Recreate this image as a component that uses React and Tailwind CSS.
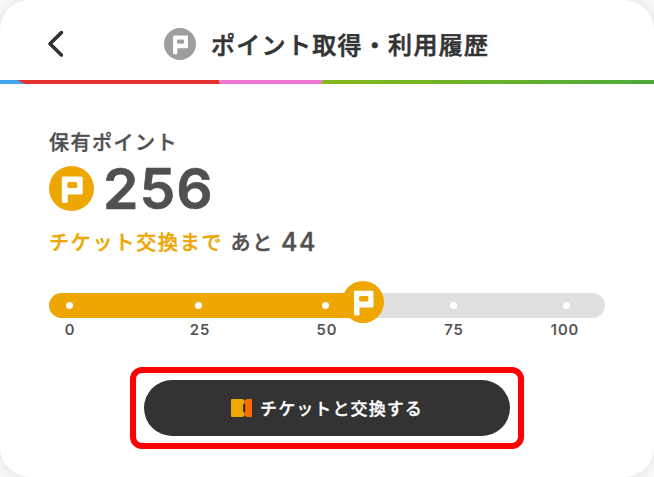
import React from 'react';

const steps = [
  { label: '0', dot: 'left-[17px]', text: 'left-[21px]' },
  { label: '25', dot: 'left-[146px]', text: 'left-[151px]' },
  { label: '50', dot: 'left-[273px]', text: 'left-[278px]' },
  { label: '75', dot: 'left-[401px]', text: 'left-[405px]' },
  { label: '100', dot: 'left-[514px]', text: 'left-[516px]' },
];

function PointIcon({ className }) {
  return (
    <svg viewBox="0 0 45 45" className={className}>
      <circle cx="22.5" cy="22.5" r="22.5" fill="currentColor" />
      <path
        fill="#fff"
        fillRule="evenodd"
        d="M14 10.5H32.2Q33.7 10.5 33.7 12V27Q33.7 28.5 32.2 28.5H18.8V35.6Q18.8 37 17.4 37H14.2Q12.8 37 12.8 35.6V12Q12.8 10.5 14 10.5ZM20 16Q18.3 16 18.3 17.5V20.4Q18.3 22 20 22H26.7Q28.3 22 28.3 20.4V17.5Q28.3 16 26.7 16Z"
      />
    </svg>
  );
}

function TicketIcon() {
  return (
    <svg viewBox="0 0 21 18" className="w-[21px] h-[18px] shrink-0">
      <path fill="#f0a800" d="M1 0H12.2Q12.3 1.3 13.7 1.6V4.5Q12 4.5 12 6V12Q12 13.5 13.7 13.5V16.4Q12.3 16.7 12.2 18H1Q0 18 0 17V1Q0 0 1 0Z" />
      <path fill="#ff6b00" d="M15.2 0H20Q21 0 21 1V17Q21 18 20 18H15.2Q15 16.7 13.7 16.4V13.5Q14.3 13 14.3 12V6Q14.3 5 13.7 4.5V1.6Q15 1.3 15.2 0Z" />
    </svg>
  );
}

function Header() {
  return (
    <header>
      <div className="relative flex h-20 items-center pt-[7px] pl-[164px]">
        <button className="absolute left-[47px] top-[30px]" aria-label="戻る">
          <svg viewBox="0 0 17 28" className="h-7 w-[17px]" fill="none" stroke="#333" strokeWidth="3.6" strokeLinecap="round" strokeLinejoin="round">
            <path d="M14.4 2.6L3 13.7L14.4 25" />
          </svg>
        </button>
        <PointIcon className="h-8 w-8 text-[#9e9e9e]" />
        <h1 className="ml-[15px] whitespace-nowrap text-[24px] font-medium leading-9 tracking-[1.3px] text-[#333] [-webkit-text-stroke:0.6px_#333]">
          ポイント取得・利用履歴
        </h1>
      </div>
      <svg viewBox="0 0 654 4" className="block h-1 w-full">
        <defs>
          <linearGradient id="green">
            <stop offset="0" stopColor="#86b81b" />
            <stop offset="1" stopColor="#4caa3a" />
          </linearGradient>
        </defs>
        <path fill="#42a5f0" d="M0 0H18L26 4H0Z" />
        <path fill="#e0312b" d="M17 0H219L220 4H25Z" />
        <path fill="#ee75d2" d="M219 0H323L321 4H220Z" />
        <path fill="url(#green)" d="M323 0H654V4H321Z" />
      </svg>
    </header>
  );
}

function Progress() {
  return (
    <div className="mt-[35px]">
      <div className="relative h-[25px] w-[556px] rounded-full bg-[#e0e0e0]">
        <div className="h-full w-[314px] rounded-l-full bg-[#eea600]" />
        {steps.map((step) => (
          <span key={step.label} className={`absolute top-[9px] h-[7px] w-[7px] rounded-full bg-white ${step.dot}`} />
        ))}
        <PointIcon className="absolute left-[293px] -top-[12px] h-[42px] w-[42px] text-[#eea600]" />
      </div>
      <div className="relative h-6 w-[556px]">
        {steps.map((step) => (
          <span key={step.label} className={`absolute top-[2px] -translate-x-1/2 font-['Inter'] text-[15px] font-medium leading-5 tracking-[0.9px] text-[#505050] [-webkit-text-stroke:0.2px_#505050] ${step.text}`}>
            {step.label}
          </span>
        ))}
      </div>
    </div>
  );
}

export default function App() {
  return (
    <div className="h-[477px] w-[654px] overflow-hidden bg-[#fafafa] font-['Noto_Sans_CJK_JP',sans-serif]">
      <div className="h-full overflow-hidden rounded-[30px] bg-white shadow-[0_0_14px_rgba(0,0,0,0.12)]">
        <Header />
        <main className="pl-[49px] pt-[43px] text-[#505050]">
          <p className="h-[30px] text-[20px] font-medium leading-[30px] tracking-[1.5px] [-webkit-text-stroke:0.4px_#505050]">保有ポイント</p>
          <div className="mt-[9px] flex h-[45px] items-center">
            <PointIcon className="h-[45px] w-[45px] text-[#eea600]" />
            <span className="ml-[9px] font-['Inter'] text-[57px] font-semibold leading-[45px] tracking-[1px] [-webkit-text-stroke:0.6px_#505050]">256</span>
          </div>
          <p className="mt-[15px] flex h-8 items-center whitespace-nowrap text-[20px] font-medium leading-8 tracking-[1.8px] [-webkit-text-stroke:0.4px_currentColor]">
            <span className="text-[#eea600] [-webkit-text-stroke:0.4px_#eea600]">チケット交換まで</span>
            <span className="ml-[7px]">あと</span>
            <span className="ml-[7px] font-['Inter'] text-[25px] tracking-[1.7px]">44</span>
          </p>
          <Progress />
        </main>
        <div className="ml-[130px] mt-[25px] h-[82px] w-[394px] rounded-xl border-[6px] border-[#ff0000] px-2 py-[7px]">
          <button className="flex h-14 w-[366px] items-center justify-center rounded-full bg-[#333] text-white">
            <TicketIcon />
            <span className="ml-2 whitespace-nowrap text-[17px] font-medium leading-6 tracking-[1.1px] [-webkit-text-stroke:0.3px_#fff]">チケットと交換する</span>
          </button>
        </div>
      </div>
    </div>
  );
}
